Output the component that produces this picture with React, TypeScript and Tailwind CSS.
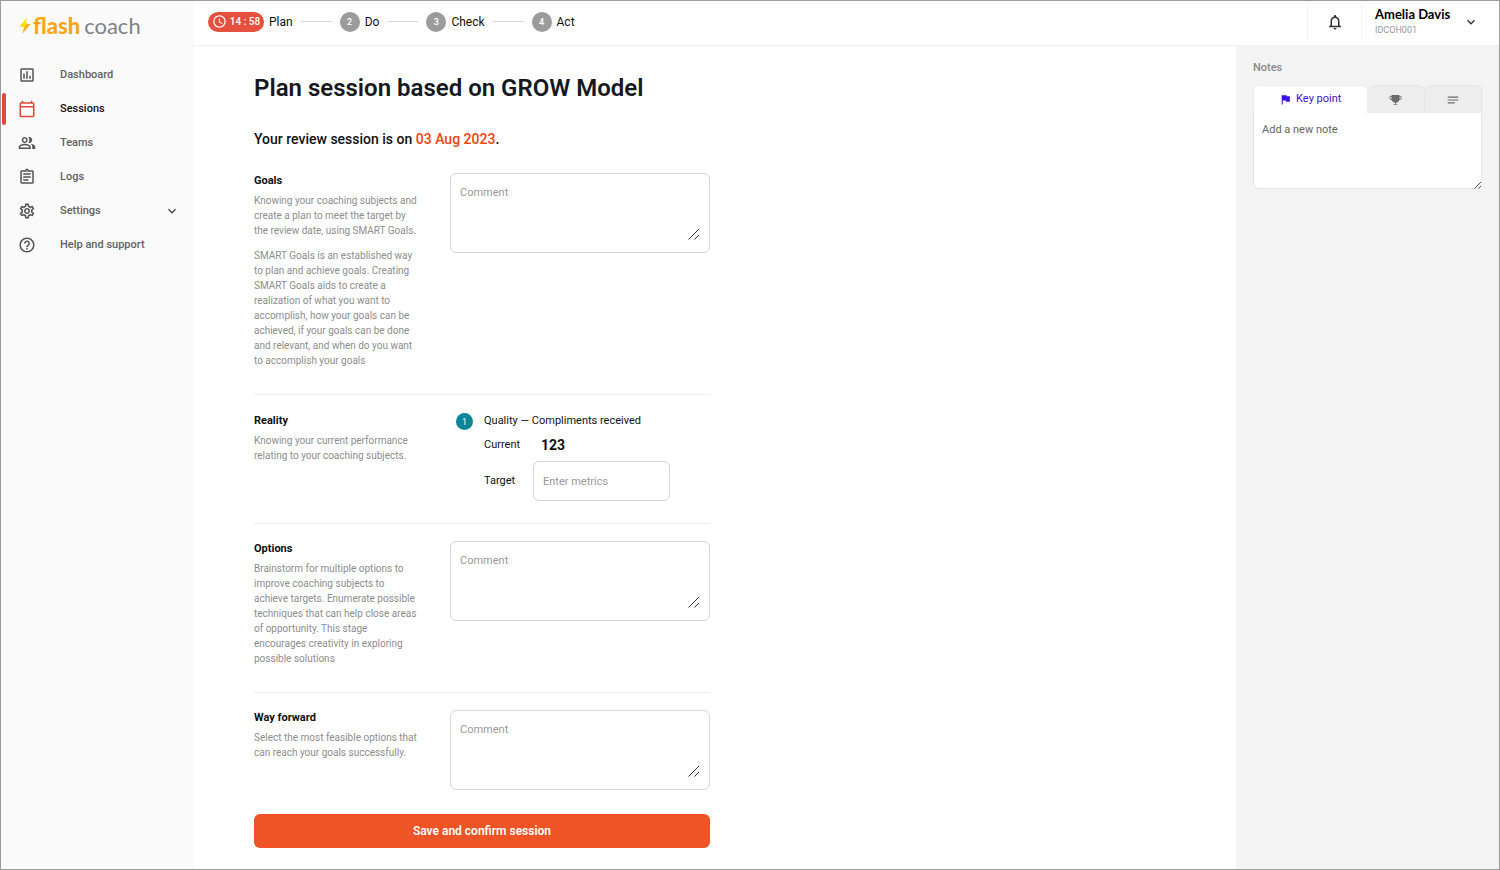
import { useState } from "react";
import type { ReactNode } from "react";
import {
  MdAccessTime,
  MdFlag,
  MdHelpOutline,
  MdKeyboardArrowDown,
  MdNotes,
  MdNotificationsNone,
  MdOutlineAssessment,
  MdOutlineAssignment,
  MdOutlineCalendarToday,
  MdOutlinePeopleAlt,
  MdOutlineSettings,
} from "react-icons/md";
import { PiTrophyFill } from "react-icons/pi";

const navItems = [
  { label: "Dashboard", icon: MdOutlineAssessment },
  { label: "Sessions", icon: MdOutlineCalendarToday, active: true },
  { label: "Teams", icon: MdOutlinePeopleAlt },
  { label: "Logs", icon: MdOutlineAssignment },
  { label: "Settings", icon: MdOutlineSettings, expandable: true },
  { label: "Help and support", icon: MdHelpOutline },
];

const steps = ["Plan", "Do", "Check", "Act"];

function Logo() {
  return (
    <a href="#" className="flex items-center pl-[18px] h-7 font-['Lato',sans-serif] text-[22px]">
      <svg viewBox="0 0 12 17" className="w-3 h-[17px] mr-0.5">
        <path d="M8 0.5 0.5 9.5 5.2 9.9 3.6 16.5 11.5 6.9 6.7 6.5z" fill="#fde000" />
        <path d="M6.7 6.5 11.5 6.9 3.6 16.5 5.2 9.9 8 6.6z" fill="#fbb034" />
      </svg>
      <span className="font-black text-[#f9a71a]">flash</span>
      <span className="ml-1 text-[#808285]">coach</span>
    </a>
  );
}

function Sidebar() {
  return (
    <aside className="w-[193px] shrink-0 bg-[#fafafa] pt-[10px]">
      <Logo />
      <nav className="mt-[19px]">
        {navItems.map(({ label, icon: Icon, active, expandable }) => (
          <a
            key={label}
            href="#"
            className={`flex items-center h-[34px] pr-[14px] text-[11px] font-medium ${
              active ? "text-[#111]" : "text-[#626262]"
            }`}
          >
            <span className={`w-1 h-8 ml-px rounded-sm ${active ? "bg-[#e5493a]" : ""}`} />
            <Icon className={`ml-3 size-[18px] ${active ? "text-[#e5493a]" : "text-[#555]"}`} />
            <span className="ml-6 flex-1">{label}</span>
            {expandable && <MdKeyboardArrowDown className="size-4 text-[#444]" />}
          </a>
        ))}
      </nav>
    </aside>
  );
}

function Header() {
  return (
    <header className="flex items-center h-[45px] pb-[3px] bg-white border-b border-[#f3f3f3]">
      <ol className="flex items-center gap-2 pl-[14px] text-xs text-[#111]">
        {steps.map((step, i) => (
          <li key={step} className="flex items-center gap-2">
            {i > 0 && <span className="w-[31px] h-px bg-[#d9d9d9]" />}
            <span className="flex items-center gap-[5px]">
              {i === 0 ? (
                <span className="flex items-center justify-center gap-[3px] w-14 h-5 rounded-full bg-[#e5503f] text-white text-[10px] font-medium">
                  <MdAccessTime className="size-[15px]" />
                  14 : 58
                </span>
              ) : (
                <span className="flex items-center justify-center size-5 rounded-full bg-[#9b9b9b] text-white text-[9px] font-medium">
                  {i + 1}
                </span>
              )}
              {step}
            </span>
          </li>
        ))}
      </ol>
      <div className="flex ml-auto h-9">
        <button aria-label="Notifications" className="flex items-center justify-center w-[54px] border-l border-[#f5f5f5] text-[#333]">
          <MdNotificationsNone className="size-[18px]" />
        </button>
        <button className="flex items-center w-[138px] pl-[13px] pr-5 border-l border-[#f5f5f5] text-left">
          <span className="flex-1">
            <span className="block font-['Lato',sans-serif] text-[13px] leading-4 font-bold text-black">Amelia Davis</span>
            <span className="block text-[9px] leading-4 text-[#999]">IDCOH001</span>
          </span>
          <MdKeyboardArrowDown className="size-4 text-[#333]" />
        </button>
      </div>
    </header>
  );
}

function CommentBox({ id }: { id: string }) {
  return (
    <div className="relative flex self-start">
      <textarea
        id={id}
        placeholder="Comment"
        className="w-full h-20 px-[9px] py-[11px] border border-[#d5d5d5] rounded-md resize-none outline-none text-[11px] leading-4 placeholder:text-[#9b9b9b]"
      />
      <svg viewBox="0 0 12 12" className="absolute right-[10px] bottom-[13px] size-3 pointer-events-none" stroke="#333" fill="none">
        <path d="M0.5 11.5 11 1M6.5 11.5 11 7" />
      </svg>
    </div>
  );
}

function Section({ id, title, text, children }: { id: string; title: string; text: string[]; children: ReactNode }) {
  return (
    <section className="grid grid-cols-[164px_1fr] gap-8">
      <div>
        <label htmlFor={id} className="block text-[11px] leading-4 font-bold text-[#111]">
          {title}
        </label>
        <div className="mt-1 flex flex-col gap-[10px] text-[10px] leading-[15px] text-[#8e8e8e]">
          {text.map((t) => (
            <p key={t}>{t}</p>
          ))}
        </div>
      </div>
      {children}
    </section>
  );
}

function PlanForm() {
  return (
    <main className="flex-1 bg-white pl-[60px] pr-6 pt-[26px] pb-5">
      <form className="max-w-[456px]" onSubmit={(e) => e.preventDefault()}>
        <h1 className="text-2xl leading-8 font-semibold text-[#15181e]">Plan session based on GROW Model</h1>
        <p className="mt-[25px] mb-6 text-sm leading-5 font-medium text-[#111]">
          Your review session is on <span className="text-[#f0440f]">03 Aug 2023</span>.
        </p>

        <Section
          id="goals"
          title="Goals"
          text={[
            "Knowing your coaching subjects and create a plan to meet the target by the review date, using SMART Goals.",
            "SMART Goals is an established way to plan and achieve goals. Creating SMART Goals aids to create a realization of what you want to accomplish, how your goals can be achieved, if your goals can be done and relevant, and when do you want to accomplish your goals",
          ]}
        >
          <CommentBox id="goals" />
        </Section>

        <hr className="mt-[26px] mb-[18px] border-[#f0f0f0]" />

        <Section id="target" title="Reality" text={["Knowing your current performance relating to your coaching subjects."]}>
          <div className="flex gap-[11px] pl-1.5 text-[11px] leading-4 text-[#111]">
            <span className="flex items-center justify-center size-[17px] shrink-0 rounded-full bg-[#0b8599] text-white text-[9px]">1</span>
            <div>
              <p>Quality — Compliments received</p>
              <dl className="flex items-center mt-1.5 h-5">
                <dt className="w-[57px]">Current</dt>
                <dd className="text-sm font-bold">123</dd>
              </dl>
              <div className="flex items-center mt-1.5">
                <label htmlFor="target" className="w-[49px]">
                  Target
                </label>
                <input
                  id="target"
                  placeholder="Enter metrics"
                  className="w-[137px] h-10 px-[9px] border border-[#d5d5d5] rounded-md outline-none placeholder:text-[#9b9b9b]"
                />
              </div>
            </div>
          </div>
        </Section>

        <hr className="mt-[22px] mb-[17px] border-[#f0f0f0]" />

        <Section
          id="options"
          title="Options"
          text={[
            "Brainstorm for multiple options to improve coaching subjects to achieve targets. Enumerate possible techniques that can help close areas of opportunity. This stage encourages creativity in exploring possible solutions",
          ]}
        >
          <CommentBox id="options" />
        </Section>

        <hr className="mt-[26px] mb-[17px] border-[#f0f0f0]" />

        <Section
          id="forward"
          title="Way forward"
          text={["Select the most feasible options that can reach your goals successfully."]}
        >
          <CommentBox id="forward" />
        </Section>

        <button type="submit" className="w-full h-[34px] mt-6 rounded-md bg-[#ee5425] text-white text-xs font-semibold">
          Save and confirm session
        </button>
      </form>
    </main>
  );
}

function Notes() {
  const [tab, setTab] = useState(0);
  const tabs = [
    { name: "Key point", icon: MdFlag, size: "size-[13px]" },
    { name: "Achievements", icon: PiTrophyFill, size: "size-[13px]" },
    { name: "Notes", icon: MdNotes, size: "size-[14px]" },
  ];

  return (
    <aside className="w-[263px] shrink-0 bg-[#f3f3f3] px-[17px] pt-[14px]">
      <label htmlFor="note" className="block text-[11px] leading-4 font-medium text-[#8a8a8a]">
        Notes
      </label>
      <div className="grid grid-cols-[2fr_1fr_1fr] mt-[9px] h-7" role="tablist">
        {tabs.map(({ name, icon: Icon, size }, i) => (
          <button
            key={name}
            role="tab"
            aria-selected={tab === i}
            aria-label={name}
            onClick={() => setTab(i)}
            className={`flex items-center justify-center gap-1 rounded-t-md border border-b-0 text-[11px] ${
              tab === i ? "bg-white border-[#ececec] text-[#3d12d8]" : "bg-[#ededed] border-[#e6e6e6] border-l-0 text-[#6b6b6b]"
            }`}
          >
            <Icon className={size} />
            {i === 0 && name}
          </button>
        ))}
      </div>
      <div className="relative flex">
        <textarea
          id="note"
          placeholder="Add a new note"
          className="w-full h-[76px] px-2 py-[9px] bg-white border border-t-0 border-[#e6e6e6] rounded-b-md resize-none outline-none text-[11px] leading-4 placeholder:text-[#666]"
        />
        <svg viewBox="0 0 8 8" className="absolute right-0 bottom-0 size-2 pointer-events-none" stroke="#555" fill="none">
          <path d="M0.5 7.5 7 1M4.5 7.5 7 5" />
        </svg>
      </div>
    </aside>
  );
}

export default function App() {
  return (
    <div className="flex min-h-screen border border-[#9c9c9c] bg-white font-['Roboto',sans-serif]">
      <Sidebar />
      <div className="flex flex-1 flex-col">
        <Header />
        <div className="flex flex-1">
          <PlanForm />
          <Notes />
        </div>
      </div>
    </div>
  );
}
